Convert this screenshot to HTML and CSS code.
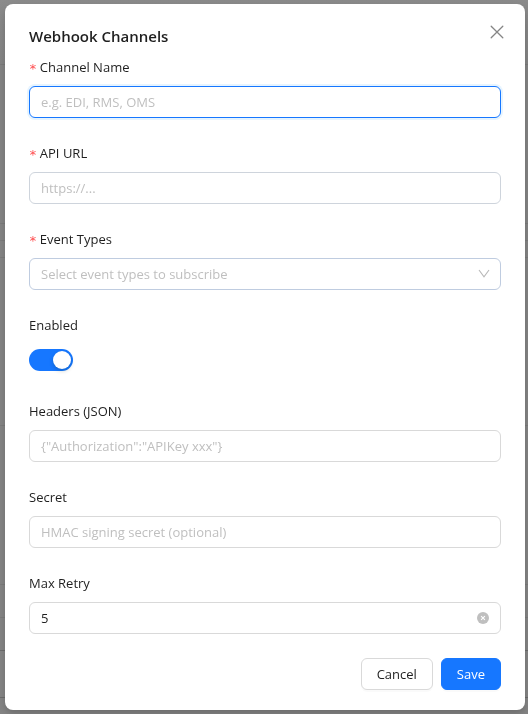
FILE: index.html
```html
<!DOCTYPE html>
<html lang="en">

<head>
	<meta charset="utf-8">
	<meta name="viewport" content="width=device-width, initial-scale=1">
	<title>Webhook Channels</title>
	<link rel="stylesheet" href="styles.css">
</head>

<body>
	<!-- dimmed page behind the dialog -->
	<div class="backdrop" aria-hidden="true">
		<div class="band band-top"></div>
		<div class="band band-tall"></div>
		<div class="band band-short"></div>
		<div class="band band-short"></div>
		<div class="band band-taller"></div>
		<div class="band band-tall"></div>
		<div class="band"></div>
		<div class="band band-dark"></div>
		<div class="band band-dark band-last"></div>
	</div>
	<div class="modal-wrap">
		<form class="modal" role="dialog" aria-labelledby="title">
			<header class="modal-header">
				<h1 id="title">Webhook Channels</h1>
				<button type="button" class="close" aria-label="Close">
					<svg width="14" height="14" viewBox="0 0 14 14" fill="none" stroke="currentColor" stroke-width="1.3" stroke-linecap="round"><path d="M1.2 1.2 12.8 12.8M12.8 1.2 1.2 12.8"/></svg>
				</button>
			</header>
			<div class="field">
				<label class="required" for="name">Channel Name</label>
				<input type="text" id="name" class="control active" placeholder="e.g. EDI, RMS, OMS">
			</div>
			<div class="field">
				<label class="required" for="url">API URL</label>
				<input type="text" id="url" class="control cool" placeholder="https://...">
			</div>
			<div class="field">
				<label class="required" for="events">Event Types</label>
				<div class="affix">
					<select id="events" class="control cooler">
						<option value="">Select event types to subscribe</option>
					</select>
					<svg class="suffix" width="12" height="12" viewBox="0 0 12 12" fill="none" stroke="currentColor" stroke-width="1.1"><path d="M1 2 6 8.8 11 2"/></svg>
				</div>
			</div>
			<div class="field">
				<label for="enabled">Enabled</label>
				<div class="switch-row">
					<input type="checkbox" role="switch" id="enabled" class="switch" checked>
				</div>
			</div>
			<div class="field">
				<label for="headers">Headers (JSON)</label>
				<input type="text" id="headers" class="control" placeholder="{&quot;Authorization&quot;:&quot;APIKey xxx&quot;}">
			</div>
			<div class="field">
				<label for="secret">Secret</label>
				<input type="text" id="secret" class="control" placeholder="HMAC signing secret (optional)">
			</div>
			<div class="field">
				<label for="retry">Max Retry</label>
				<div class="affix">
					<input type="text" inputmode="numeric" id="retry" class="control" value="5">
					<button type="button" class="suffix clear" aria-label="Clear">
						<svg width="12" height="12" viewBox="0 0 12 12"><circle cx="6" cy="6" r="6" fill="#bfbfbf"/><path d="M4.1 4.1 7.9 7.9M7.9 4.1 4.1 7.9" stroke="#fff" stroke-width="1.1"/></svg>
					</button>
				</div>
			</div>
			<footer class="modal-footer">
				<button type="button" class="btn">Cancel</button>
				<button type="submit" class="btn btn-primary">Save</button>
			</footer>
		</form>
	</div>
</body>

</html>
```
FILE: styles.css
```css
* {
	box-sizing: border-box;
}
body {
	margin: 0;
	background: #858585;
	color: #1f1f1f;
	font-family: "Open Sans", "Noto Sans", sans-serif;
	font-size: 13px;
	line-height: 22px;
}
.backdrop {
	position: fixed;
	inset: 0;
	overflow: hidden;
}
.band {
	height: 33px;
	border-bottom: 1px solid #7c7c7c;
}
.band-top {
	height: 65px;
	background: linear-gradient(#8b8b8b, #858585);
}
.band-tall {
	height: 159px;
}
.band-taller {
	height: 168px;
}
.band-short {
	height: 17px;
}
.band-dark {
	border-color: #6c6c6c;
}
.band-last {
	height: 47px;
}
.modal-wrap {
	position: relative;
	padding: 4px 3px 4px 5px;
}
.modal {
	max-width: 520px;
	margin: 0 auto;
	padding: 20px 24px;
	background: #fff;
	border-radius: 8px;
	box-shadow: 0 6px 16px rgba(0, 0, 0, 0.08), 0 3px 6px rgba(0, 0, 0, 0.12);
}
.modal-header {
	display: flex;
	justify-content: space-between;
	align-items: center;
	height: 24px;
	margin-bottom: 8px;
}
h1 {
	margin: 0;
	font-size: 15px;
	font-weight: 600;
	line-height: 24px;
}
button, input, select {
	font: inherit;
	color: inherit;
}
.close {
	display: flex;
	align-items: center;
	justify-content: center;
	width: 22px;
	height: 22px;
	margin: -8px -7px 0 0;
	padding: 0;
	border: 0;
	background: none;
	color: #858585;
}
.field {
	margin-bottom: 24px;
}
label {
	display: flex;
	align-items: center;
	width: fit-content;
	height: 22px;
	margin-bottom: 8px;
}
.required::before {
	content: "*";
	margin-right: 3px;
	padding-top: 4px;
	color: #ff4d4f;
	font-family: "DejaVu Sans Mono", monospace;
	font-size: 13px;
}
.control {
	display: block;
	width: 100%;
	height: 32px;
	padding: 4px 11px;
	border: 1px solid #d9d9d9;
	border-radius: 6px;
	background: #fff;
	outline: none;
}
.control::placeholder {
	color: #bfbfbf;
	opacity: 1;
}
.cool {
	border-color: #ced4dc;
}
.cooler {
	border-color: #bfcce0;
}
.active, .control:focus {
	border-color: #1677ff;
	box-shadow: 0 0 0 2px rgba(5, 145, 255, 0.1);
}
select.control {
	appearance: none;
	color: #bfbfbf;
}
.affix {
	position: relative;
}
.suffix {
	position: absolute;
	top: 10px;
	right: 11px;
	color: #b8b8b8;
}
.clear {
	display: flex;
	padding: 0;
	border: 0;
	background: none;
	right: 12px;
}
.switch-row {
	display: flex;
	align-items: center;
	height: 32px;
}
.switch {
	appearance: none;
	display: flex;
	width: 44px;
	height: 22px;
	margin: 0;
	padding: 2px;
	border-radius: 11px;
	background: #bfbfbf;
}
.switch::before {
	content: "";
	width: 18px;
	height: 18px;
	border-radius: 50%;
	background: #fff;
	box-shadow: 0 2px 4px rgba(0, 35, 11, 0.2);
}
.switch:checked {
	justify-content: flex-end;
	background: #1677ff;
}
.modal-footer {
	display: flex;
	justify-content: flex-end;
	gap: 8px;
}
.btn {
	height: 32px;
	padding: 4px 15px;
	border: 1px solid #d9d9d9;
	border-radius: 6px;
	background: #fff;
	box-shadow: 0 2px 0 rgba(0, 0, 0, 0.02);
}
.btn-primary {
	border-color: #1677ff;
	background: #1677ff;
	color: #fff;
}
```
